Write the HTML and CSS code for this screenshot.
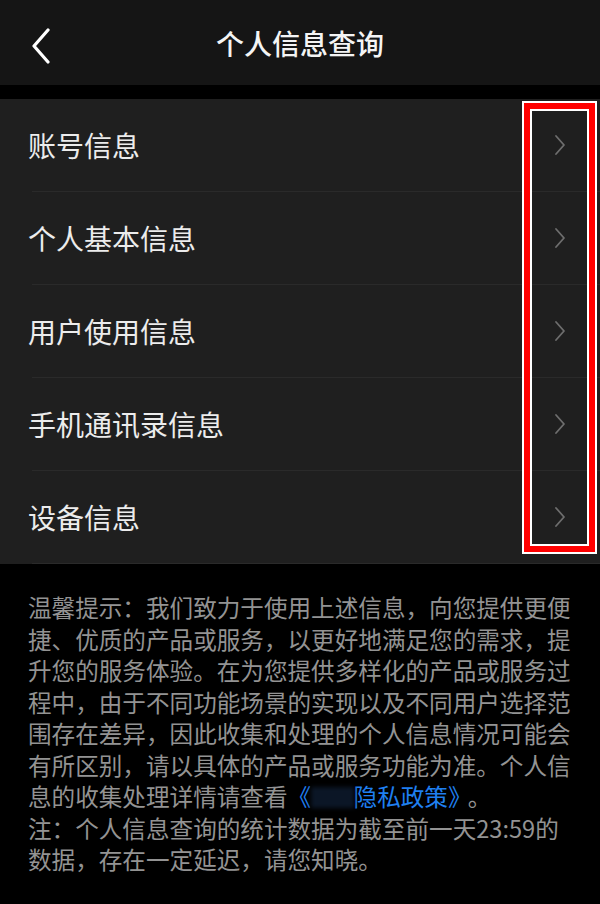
FILE: index.html
```html
<!DOCTYPE html>
<html lang="zh-CN">
<head>
<meta charset="utf-8">
<link rel="stylesheet" href="styles.css">
</head>
<body>
<div class="page">
  <header class="topbar">
    <svg class="back" width="20" height="36" viewBox="0 0 20 36"><polyline points="17,2 3,18 17,34" fill="none" stroke="#ffffff" stroke-width="3.2" stroke-linecap="round" stroke-linejoin="round"/></svg>
    <h1 class="title">个人信息查询</h1>
  </header>
  <div class="list">
    <div class="row"><span class="label">账号信息</span><svg class="chev" width="12" height="22" viewBox="0 0 12 22"><polyline points="2,2 10,11 2,20" fill="none" stroke="#6e6e6e" stroke-width="1.8" stroke-linecap="round" stroke-linejoin="round"/></svg></div>
    <div class="row"><span class="label">个人基本信息</span><svg class="chev" width="12" height="22" viewBox="0 0 12 22"><polyline points="2,2 10,11 2,20" fill="none" stroke="#6e6e6e" stroke-width="1.8" stroke-linecap="round" stroke-linejoin="round"/></svg></div>
    <div class="row"><span class="label">用户使用信息</span><svg class="chev" width="12" height="22" viewBox="0 0 12 22"><polyline points="2,2 10,11 2,20" fill="none" stroke="#6e6e6e" stroke-width="1.8" stroke-linecap="round" stroke-linejoin="round"/></svg></div>
    <div class="row"><span class="label">手机通讯录信息</span><svg class="chev" width="12" height="22" viewBox="0 0 12 22"><polyline points="2,2 10,11 2,20" fill="none" stroke="#6e6e6e" stroke-width="1.8" stroke-linecap="round" stroke-linejoin="round"/></svg></div>
    <div class="row"><span class="label">设备信息</span><svg class="chev" width="12" height="22" viewBox="0 0 12 22"><polyline points="2,2 10,11 2,20" fill="none" stroke="#6e6e6e" stroke-width="1.8" stroke-linecap="round" stroke-linejoin="round"/></svg></div>
    <div class="highlight"></div>
  </div>
  <div class="notes">
    <p>温馨提示：我们致力于使用上述信息，向您提供更便捷、优质的产品或服务，以更好地满足您的需求，提升您的服务体验。在为您提供多样化的产品或服务过程中，由于不同功能场景的实现以及不同用户选择范围存在差异，因此收集和处理的个人信息情况可能会有所区别，请以具体的产品或服务功能为准。个人信息的收集处理详情请查看<a class="link">《<span class="redact"></span>隐私政策》</a><span class="stop">。</span></p>
    <p>注：个人信息查询的统计数据为截至前一天23:59的数据，存在一定延迟，请您知晓。</p>
  </div>
</div>
</body>
</html>
```
FILE: styles.css
```css
html, body {
  margin: 0;
  padding: 0;
  background: #000;
}
.page {
  width: 600px;
  min-height: 904px;
  background: #000;
  font-family: "Noto Sans CJK SC", "Noto Sans", sans-serif;
}
.topbar {
  height: 85px;
  background: #151515;
  display: flex;
  align-items: center;
  justify-content: center;
  position: relative;
}
.back {
  position: absolute;
  left: 31px;
  top: 28px;
}
.title {
  margin: 0;
  color: #f4f4f4;
  font-size: 28px;
  font-weight: 500;
}
.list {
  margin-top: 14px;
  background: #1f1f1f;
  position: relative;
}
.row {
  height: 93px;
  margin-left: 32px;
  padding-right: 28px;
  display: flex;
  align-items: center;
  justify-content: space-between;
  border-bottom: 1px solid #2a2a2a;
  box-sizing: border-box;
}
.row:last-of-type {
  border-bottom: none;
  height: 94px;
}
.label {
  margin-left: -4px;
  color: #ececec;
  font-size: 28px;
}
.chev {
  display: block;
  margin-right: 6px;
}
.highlight {
  position: absolute;
  left: 524px;
  top: 4px;
  width: 71px;
  height: 449px;
  box-sizing: border-box;
  border: 6px solid #ff0000;
  outline: 2px solid #ffffff;
  box-shadow: inset 0 0 0 2px #ffffff;
}
.notes {
  padding: 28px 22px 0 28px;
  color: #939393;
  font-size: 23.6px;
  line-height: 31.5px;
}
.notes p {
  margin: 0;
}
.link {
  color: #1f7ff0;
}
.stop {
  margin-left: 8px;
}
.redact {
  display: inline-block;
  width: 1.8em;
  height: 0.9em;
  vertical-align: -0.1em;
  background: #0b1626;
  filter: blur(2px);
}
```
